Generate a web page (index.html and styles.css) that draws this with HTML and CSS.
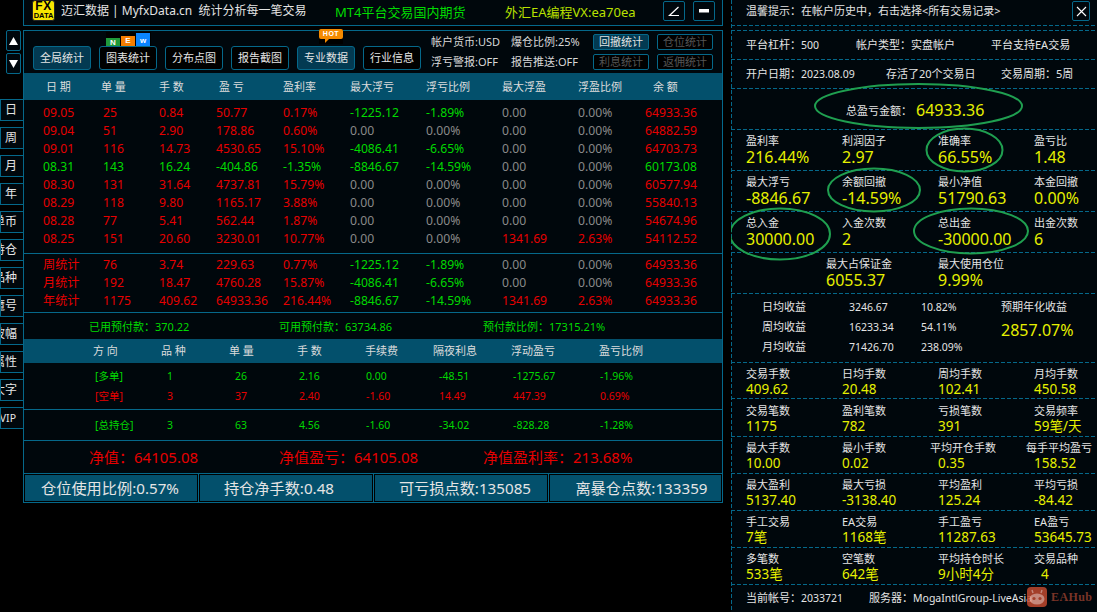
FILE: index.html
```html
<!DOCTYPE html>
<html lang="zh-CN">
<head>
<meta charset="utf-8">
<title>迈汇数据</title>
<link rel="stylesheet" href="styles.css">
</head>
<body>
<div class="app">
  <nav class="side">
    <div class="arrows">
      <button class="arrow"><svg width="9" height="8" viewBox="0 0 9 8"><polygon points="4.5,0 9,8 0,8" fill="#fff"/></svg></button>
      <button class="arrow"><svg width="9" height="8" viewBox="0 0 9 8"><polygon points="0,0 9,0 4.5,8" fill="#fff"/></svg></button>
    </div>
    <div class="tabs">
      <div class="tab">日</div><div class="tab">周</div><div class="tab">月</div><div class="tab">年</div>
      <div class="tab">单币</div><div class="tab">持仓</div><div class="tab">品种</div><div class="tab">魔号</div>
      <div class="tab">波幅</div><div class="tab">属性</div><div class="tab">大字</div><div class="tab tab-vip">VIP</div>
    </div>
  </nav>

  <main class="left">
    <header class="topbar">
      <div class="logo"><span class="logo-fx">FX</span><span class="logo-data">DATA</span></div>
      <div class="brand">迈汇数据 | MyfxData.cn&nbsp; 统计分析每一笔交易</div>
      <div class="promo promo-green">MT4平台交易国内期货</div>
      <div class="promo promo-yellow">外汇EA编程VX:ea70ea</div>
      <div class="win-btns">
        <button class="win-btn"><svg width="12" height="11" viewBox="0 0 12 11"><path d="M10.5 1 L1.5 9.5 H11" fill="none" stroke="#fff" stroke-width="1.2"/></svg></button>
        <button class="win-btn"><svg width="12" height="4" viewBox="0 0 12 4"><rect x="1" width="10" height="3.5" fill="#fff"/></svg></button>
      </div>
    </header>

    <section class="panel">
      <div class="toolbar">
        <div class="btn-row">
          <button class="btn btn-on">全局统计</button>
          <button class="btn">图表统计
            <span class="new"><i class="n">N</i><i class="e">E</i><i class="w">w</i></span>
          </button>
          <button class="btn">分布点图</button>
          <button class="btn">报告截图</button>
          <button class="btn btn-on">专业数据
            <span class="hot"><svg width="24" height="15" viewBox="0 0 24 15"><path d="M2 0H22a2 2 0 0 1 2 2V8a2 2 0 0 1-2 2H10L6 14V10H2a2 2 0 0 1-2-2V2a2 2 0 0 1 2-2Z" fill="#f58a00"/></svg><b>HOT</b></span>
          </button>
          <button class="btn">行业信息</button>
        </div>
        <div class="info">
          <span>帐户货币:USD</span><span>爆仓比例:25%</span>
          <span>浮亏警报:OFF</span><span>报告推送:OFF</span>
        </div>
        <div class="mini">
          <button class="mini-btn mini-on">回撤统计</button><button class="mini-btn">仓位统计</button>
          <button class="mini-btn">利息统计</button><button class="mini-btn">返佣统计</button>
        </div>
      </div>

      <div class="grid head">
        <span>日 期</span><span>单 量</span><span>手 数</span><span>盈 亏</span><span>盈利率</span><span>最大浮亏</span><span>浮亏比例</span><span>最大浮盈</span><span>浮盈比例</span><span>余 额</span>
      </div>

      <div class="days">
        <div class="grid row"><span class="r">09.05</span><span class="r">25</span><span class="r">0.84</span><span class="r">50.77</span><span class="r">0.17%</span><span class="g">-1225.12</span><span class="g">-1.89%</span><span class="k">0.00</span><span class="k">0.00%</span><span class="r">64933.36</span></div>
        <div class="grid row"><span class="r">09.04</span><span class="r">51</span><span class="r">2.90</span><span class="r">178.86</span><span class="r">0.60%</span><span class="k">0.00</span><span class="k">0.00%</span><span class="k">0.00</span><span class="k">0.00%</span><span class="r">64882.59</span></div>
        <div class="grid row"><span class="r">09.01</span><span class="r">116</span><span class="r">14.73</span><span class="r">4530.65</span><span class="r">15.10%</span><span class="g">-4086.41</span><span class="g">-6.65%</span><span class="k">0.00</span><span class="k">0.00%</span><span class="r">64703.73</span></div>
        <div class="grid row"><span class="g">08.31</span><span class="g">143</span><span class="g">16.24</span><span class="g">-404.86</span><span class="g">-1.35%</span><span class="g">-8846.67</span><span class="g">-14.59%</span><span class="k">0.00</span><span class="k">0.00%</span><span class="g">60173.08</span></div>
        <div class="grid row"><span class="r">08.30</span><span class="r">131</span><span class="r">31.64</span><span class="r">4737.81</span><span class="r">15.79%</span><span class="k">0.00</span><span class="k">0.00%</span><span class="k">0.00</span><span class="k">0.00%</span><span class="r">60577.94</span></div>
        <div class="grid row"><span class="r">08.29</span><span class="r">118</span><span class="r">9.80</span><span class="r">1165.17</span><span class="r">3.88%</span><span class="k">0.00</span><span class="k">0.00%</span><span class="k">0.00</span><span class="k">0.00%</span><span class="r">55840.13</span></div>
        <div class="grid row"><span class="r">08.28</span><span class="r">77</span><span class="r">5.41</span><span class="r">562.44</span><span class="r">1.87%</span><span class="k">0.00</span><span class="k">0.00%</span><span class="k">0.00</span><span class="k">0.00%</span><span class="r">54674.96</span></div>
        <div class="grid row"><span class="r">08.25</span><span class="r">151</span><span class="r">20.60</span><span class="r">3230.01</span><span class="r">10.77%</span><span class="k">0.00</span><span class="k">0.00%</span><span class="r">1341.69</span><span class="r">2.63%</span><span class="r">54112.52</span></div>
      </div>

      <div class="totals">
        <div class="grid row"><span class="r">周统计</span><span class="r">76</span><span class="r">3.74</span><span class="r">229.63</span><span class="r">0.77%</span><span class="g">-1225.12</span><span class="g">-1.89%</span><span class="k">0.00</span><span class="k">0.00%</span><span class="r">64933.36</span></div>
        <div class="grid row"><span class="r">月统计</span><span class="r">192</span><span class="r">18.47</span><span class="r">4760.28</span><span class="r">15.87%</span><span class="g">-4086.41</span><span class="g">-6.65%</span><span class="k">0.00</span><span class="k">0.00%</span><span class="r">64933.36</span></div>
        <div class="grid row"><span class="r">年统计</span><span class="r">1175</span><span class="r">409.62</span><span class="r">64933.36</span><span class="r">216.44%</span><span class="g">-8846.67</span><span class="g">-14.59%</span><span class="r">1341.69</span><span class="r">2.63%</span><span class="r">64933.36</span></div>
      </div>

      <div class="triple prepay g">
        <span>已用预付款&#65306;370.22</span><span>可用预付款&#65306;63734.86</span><span>预付款比例&#65306;17315.21%</span>
      </div>

      <div class="pos-head">
        <span>方 向</span><span>品 种</span><span>单 量</span><span>手 数</span><span>手续费</span><span>隔夜利息</span><span>浮动盈亏</span><span>盈亏比例</span>
      </div>
      <div class="pos-rows">
        <div class="pos g"><span>[多单]</span><span>1</span><span>26</span><span>2.16</span><span>0.00</span><span>-48.51</span><span>-1275.67</span><span>-1.96%</span></div>
        <div class="pos r"><span>[空单]</span><span>3</span><span>37</span><span>2.40</span><span>-1.60</span><span>14.49</span><span>447.39</span><span>0.69%</span></div>
      </div>
      <div class="pos pos-total g"><span>[总持仓]</span><span>3</span><span>63</span><span>4.56</span><span>-1.60</span><span>-34.02</span><span>-828.28</span><span>-1.28%</span></div>

      <div class="triple equity r">
        <span>净值&#65306;64105.08</span><span>净值盈亏&#65306;64105.08</span><span>净值盈利率&#65306;213.68%</span>
      </div>

      <div class="cells">
        <div class="cell">仓位使用比例:0.57%</div>
        <div class="cell">持仓净手数:0.48</div>
        <div class="cell">可亏损点数:135085</div>
        <div class="cell">离暴仓点数:133359</div>
      </div>
    </section>
  </main>

  <aside class="right">
    <div class="rrow tip"><span>温馨提示&#65306;在帐户历史中&#65292;右击选择&lt;所有交易记录&gt;</span>
      <button class="close"><svg width="11" height="11" viewBox="0 0 11 11"><path d="M1 1 10 10M10 1 1 10" stroke="#fff" stroke-width="1.1"/></svg></button>
    </div>
    <div class="rrow spacer"></div>
    <div class="rrow line one"><span>平台杠杆&#65306;<em>500</em></span><span>帐户类型&#65306;实盘帐户</span><span>平台支持EA交易</span></div>
    <div class="rrow line two"><span>开户日期&#65306;<em>2023.08.09</em></span><span>存活了20个交易日</span><span>交易周期&#65306;5周</span></div>
    <div class="rrow total"><span>总盈亏金额&#65306;</span><b>64933.36</b></div>

    <div class="rrow stats"><div><span>盈利率</span><b>216.44%</b></div><div><span>利润因子</span><b>2.97</b></div><div><span>准确率</span><b>66.55%</b></div><div><span>盈亏比</span><b>1.48</b></div></div>
    <div class="rrow stats"><div><span>最大浮亏</span><b>-8846.67</b></div><div><span>余额回撤</span><b>-14.59%</b></div><div><span>最小净值</span><b>51790.63</b></div><div><span>本金回撤</span><b>0.00%</b></div></div>
    <div class="rrow stats"><div><span>总入金</span><b>30000.00</b></div><div><span>入金次数</span><b>2</b></div><div><span>总出金</span><b>-30000.00</b></div><div><span>出金次数</span><b>6</b></div></div>
    <div class="rrow stats margin"><div></div><div class="shift"><span>最大占保证金</span><b>6055.37</b></div><div><span>最大使用仓位</span><b>9.99%</b></div><div></div></div>

    <div class="rrow returns">
      <span>日均收益</span><span>3246.67</span><span>10.82%</span><span class="exp-l">预期年化收益</span>
      <span>周均收益</span><span>16233.34</span><span>54.11%</span><b class="exp-v">2857.07%</b>
      <span>月均收益</span><span>71426.70</span><span>238.09%</span>
    </div>

    <div class="rrow stats small h36"><div><span>交易手数</span><b>409.62</b></div><div><span>日均手数</span><b>20.48</b></div><div><span>周均手数</span><b>102.41</b></div><div><span>月均手数</span><b>450.58</b></div></div>
    <div class="rrow stats small h38"><div><span>交易笔数</span><b>1175</b></div><div><span>盈利笔数</span><b>782</b></div><div><span>亏损笔数</span><b>391</b></div><div><span>交易频率</span><b>59笔/天</b></div></div>
    <div class="rrow stats small"><div><span>最大手数</span><b>10.00</b></div><div><span>最小手数</span><b>0.02</b></div><div><span class="wide">平均开仓手数</span><b>0.35</b></div><div><span class="wide2">每手平均盈亏</span><b>158.52</b></div></div>
    <div class="rrow stats small"><div><span>最大盈利</span><b>5137.40</b></div><div><span>最大亏损</span><b>-3138.40</b></div><div><span>平均盈利</span><b>125.24</b></div><div><span>平均亏损</span><b>-84.42</b></div></div>
    <div class="rrow stats small"><div><span>手工交易</span><b>7笔</b></div><div><span>EA交易</span><b>1168笔</b></div><div><span>手工盈亏</span><b>11287.63</b></div><div><span>EA盈亏</span><b>53645.73</b></div></div>
    <div class="rrow stats small"><div><span>多笔数</span><b>533笔</b></div><div><span>空笔数</span><b>642笔</b></div><div><span>平均持仓时长</span><b>9小时4分</b></div><div><span>交易品种</span><b class="indent">4</b></div></div>
    <div class="rrow foot"><span>当前帐号&#65306;<em>2033721</em></span><span>服务器&#65306;<em class="server">MogaIntlGroup-LiveAsia</em></span></div>

    <svg class="rings" width="366" height="612" viewBox="0 0 366 612">
      <g fill="none" stroke="#1f9f50" stroke-width="2">
        <ellipse cx="187.5" cy="106" rx="103.5" ry="22"/>
        <ellipse cx="233.5" cy="150" rx="38" ry="21.5"/>
        <ellipse cx="143" cy="190" rx="46" ry="21.5"/>
        <ellipse cx="49" cy="234" rx="50" ry="25.5"/>
        <ellipse cx="240" cy="231" rx="57" ry="22.5"/>
      </g>
    </svg>
    <div class="mark">
      <svg width="20" height="20" viewBox="0 0 20 20"><rect width="20" height="20" rx="4" fill="#c0492f"/><ellipse cx="10" cy="12" rx="7.5" ry="5.5" fill="#e8a090"/><circle cx="7" cy="11.5" r="1.6" fill="#c0492f"/><circle cx="13" cy="11.5" r="1.6" fill="#c0492f"/><path d="M6 6 5 3M14 6 15 3" stroke="#e8a090" stroke-width="1.4"/></svg>
      <span>EAHub</span>
    </div>
  </aside>
</div>
</body>
</html>
```
FILE: styles.css
```css
* { box-sizing: border-box; }
html, body { margin: 0; padding: 0; background: #000; }
body {
  width: 1097px; height: 612px; overflow: hidden;
  font-family: "Noto Sans", "Noto Sans CJK SC", sans-serif;
  font-size: 11px; color: #e4e4e4;
}
button { font-family: inherit; color: inherit; padding: 0; margin: 0; cursor: default; }
em { font-style: normal; }
i { font-style: normal; }

.app { display: grid; grid-template-columns: 23px 700px 8px 366px; height: 612px; }
.app > .right { grid-column: 4; }

/* left rail */
.side { display: flex; flex-direction: column; padding-top: 30px; overflow: hidden; }
.arrows { display: flex; flex-direction: column; gap: 2px; padding-left: 6px; }
.arrow {
  width: 15px; height: 21px; background: #00070c; border: 1px solid #05688a; border-radius: 2px;
  display: flex; align-items: center; justify-content: center;
}
.tabs { display: flex; flex-direction: column; gap: 6px; margin-top: 25px; }
.tab {
  height: 22px; width: 23px; display: flex; align-items: center; justify-content: flex-end;
  padding-right: 6px; border: 1px solid #05688a; border-right: 0; font-size: 12px; line-height: 20px;
  white-space: nowrap; background: #00070c; overflow: hidden;
}
.tab-vip { font-size: 10.5px; padding-right: 7px; }

/* top bar */
.topbar {
  height: 26px; display: flex; align-items: flex-start;
  border: 1px solid #05688a; border-top: 0; background: #00070c; padding-left: 8px;
}
.logo {
  width: 23px; height: 21px; background: #f6e600; border-radius: 3px; border: 1px solid #222;
  display: flex; flex-direction: column; align-items: center; color: #000; font-weight: 700;
  font-family: "Liberation Sans", sans-serif; flex: none; overflow: hidden;
}
.logo-fx { font-size: 12px; line-height: 11px; letter-spacing: .5px; }
.logo-data { font-size: 7.5px; line-height: 8px; }
.brand { margin-left: 6px; font-size: 12px; line-height: 22px; white-space: nowrap; width: 274px; flex: none; }
.promo { font-size: 13px; line-height: 24px; white-space: nowrap; flex: none; }
.promo-green { color: #00dc00; width: 170px; }
.promo-yellow { color: #b9e000; width: 158px; }
.win-btns { display: flex; gap: 8px; padding-top: 1px; }
.win-btn {
  width: 22px; height: 20px; background: #00070c; border: 1px solid #05688a; border-radius: 2px;
  display: flex; align-items: center; justify-content: center;
}

/* main panel */
.panel { margin-top: 4px; height: 473px; border: 1px solid #05688a; background: #00070c; }
.toolbar { height: 42px; display: flex; align-items: flex-start; }
.btn-row { display: flex; gap: 8px; padding: 15px 0 0 9px; }
.btn {
  position: relative; width: 58px; height: 24px; background: #000; border: 1px solid #05688a; border-radius: 3px;
  font-size: 11px; line-height: 22px; color: #e4e4e4; white-space: nowrap;
}
.btn-on { background: #033a52; }
.new { position: absolute; left: 6px; bottom: 23px; display: flex; align-items: flex-end; background: #000; height: 14px; }
.new i { display: block; width: 14px; margin-right: 1px; color: #fff; font: 700 8px/9px "Liberation Sans", sans-serif; text-align: center; }
.new .n { background: #1f9a3a; height: 8px; }
.new .e { background: #f57d00; height: 10px; }
.new .w { background: #0a84ff; height: 13px; line-height: 15px; }
.hot { position: absolute; left: 21px; top: -18px; width: 24px; height: 15px; background: #000; display: block; }
.hot svg { display: block; }
.hot b { position: absolute; left: 0; right: 0; top: 0; color: #fff; font: 700 7px/10px "Liberation Sans", sans-serif; letter-spacing: .5px; text-align: center; }
.info {
  display: grid; grid-template-columns: 80px 82px; grid-auto-rows: 20px; margin: 1px 0 0 10px;
  line-height: 20px; white-space: nowrap; color: #d8d8d8; font-size: 11px;
}
.mini { display: grid; grid-template-columns: 56px 56px; gap: 4px 8px; margin-top: 3px; }
.mini-btn {
  height: 16px; background: #000; border: 1px solid #05688a; border-radius: 2px; color: #555;
  font-size: 11px; line-height: 14px; white-space: nowrap;
}
.mini-on { background: #033a52; color: #e4e4e4; }

.grid {
  display: grid; grid-template-columns: 60px 56px 57px 67px 67px 76px 76px 76px 67px 1fr;
  padding-left: 19px; white-space: nowrap;
}
.head { height: 27px; background: #03506c; font-size: 11px; line-height: 27px; color: #dcdcdc; }
.head span:nth-child(1) { margin-left: 3px; }
.head span:nth-child(2) { margin-left: -2px; }
.head span:nth-child(4) { margin-left: 3px; }
.head span:nth-child(10) { margin-left: 8px; }
.row { height: 18px; line-height: 18px; font-size: 12.2px; }
.r { color: #e60000; }
.g { color: #00d900; }
.k { color: #8a8a8a; }
.days { height: 154px; padding-top: 4px; border-bottom: 1px solid #05688a; }
.totals { height: 59px; padding-top: 2px; border-bottom: 1px solid #05688a; }

.triple { display: grid; grid-template-columns: 190px 204px 1fr; padding-left: 65px; white-space: nowrap; }
.prepay { height: 26px; line-height: 27px; font-size: 11px; }
.equity { height: 33px; line-height: 32px; font-size: 15px; border-bottom: 1px solid #05688a; }

.pos-head {
  height: 24px; background: #03506c; display: grid; line-height: 24px; font-size: 11px; color: #dcdcdc;
  grid-template-columns: 68px 68px 68px 68px 68px 78px 88px 1fr; padding-left: 69px; white-space: nowrap;
}
.pos-rows { height: 47px; padding-top: 3px; border-bottom: 1px solid #05688a; }
.pos {
  display: grid; grid-template-columns: 72px 68px 64px 67px 73px 74px 87px 1fr; padding-left: 71px;
  height: 20px; line-height: 20px; font-size: 10.5px; white-space: nowrap;
}
.pos-total { height: 31px; line-height: 30px; border-bottom: 1px solid #05688a; }

.cells { height: 28px; display: grid; grid-template-columns: 174px 174px 174px 1fr; gap: 1px; background: #05688a; }
.cell {
  background: #03506c; border: 1px solid #000; font-size: 15.2px; line-height: 26px; text-align: center;
  color: #e4e4e4; white-space: nowrap;
}
.cell:nth-child(1) { padding-right: 2px; }
.cell:nth-child(2) { padding-right: 14px; }
.cell:nth-child(3) { padding-left: 8px; }
.cell:nth-child(4) { padding-left: 12px; }

/* right panel */
.right {
  position: relative; display: flex; flex-direction: column; height: 612px; background-color: #00070c;
  background-image: repeating-linear-gradient(180deg, #05688a 0 4px, transparent 4px 6px);
  background-size: 1px 100%; background-repeat: no-repeat; overflow: hidden;
}
.rrow {
  flex: none; padding-left: 15px; white-space: nowrap; position: relative;
  background-image: repeating-linear-gradient(90deg, #05688a 0 4px, transparent 4px 6px);
  background-size: 100% 1px; background-position: 0 100%; background-repeat: no-repeat;
}
.tip { height: 26px; line-height: 21px; display: flex; justify-content: space-between; padding-right: 7px; font-size: 11px; }
.close {
  width: 18px; height: 20px; margin-top: 1px; background: #00070c; border: 1px solid #05688a; border-radius: 2px;
  display: flex; align-items: center; justify-content: center;
}
.spacer { height: 5px; }
.line { height: 29px; line-height: 28px; display: grid; font-size: 11px; }
.one { grid-template-columns: 110px 135px 1fr; }
.two { grid-template-columns: 140px 115px 1fr; }
.line em { font-size: 10.5px; }
.total { height: 41px; display: flex; align-items: center; padding-left: 115px; font-size: 11px; color: #e4e4e4; }
.total b { margin-left: 4px; color: #e6f000; font-size: 16px; font-weight: 400; }
.stats { height: 41px; display: grid; grid-template-columns: 96px 96px 96px 1fr; padding-top: 4px; }
.stats > div { display: flex; flex-direction: column; }
.stats span { font-size: 11px; line-height: 14px; }
.stats b { font-size: 16px; line-height: 18px; font-weight: 400; color: #e6f000; }
.shift { margin-left: -16px; }
.small { height: 37px; }
.small b { font-size: 13.5px; line-height: 16px; }
.h36 { height: 36px; }
.h38 { height: 38px; padding-top: 5px; }
.wide { margin-left: -8px; }
.wide2 { margin-left: -8px; }
.indent { padding-left: 7px; }
.returns {
  height: 69px; display: grid; grid-template-columns: 87px 72px 80px 1fr; grid-auto-rows: 20px;
  padding: 3px 0 0 31px; line-height: 20px; font-size: 10.5px;
}
.returns span:nth-child(4n+1), .returns span:nth-child(9) { font-size: 11px; }
.exp-l { font-size: 11px; }
.exp-v { font-size: 16px; font-weight: 400; color: #e6f000; line-height: 27px; }
.foot { height: 27px; line-height: 26px; display: grid; grid-template-columns: 123px 1fr; font-size: 11px; background-image: none; }
.foot em { font-size: 10.5px; }
.rings { position: absolute; left: 0; top: 0; pointer-events: none; }
.mark {
  position: absolute; left: 296px; top: 587px; display: flex; align-items: center; gap: 4px; opacity: .85;
}
.mark svg { display: block; }
.mark span { font: 700 12px/20px "Liberation Serif", serif; color: #8f3d2c; letter-spacing: .4px; }
```
